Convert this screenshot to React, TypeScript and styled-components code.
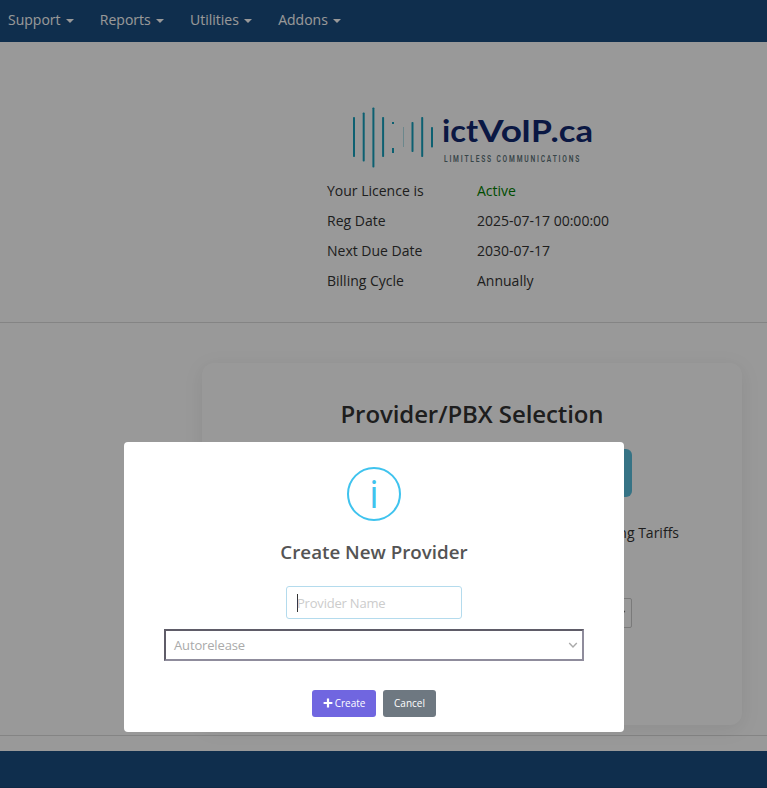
import React from 'react';
import styled, { createGlobalStyle } from 'styled-components';

const GlobalStyle = createGlobalStyle`
  * { box-sizing: border-box; }
  body { margin: 0; overflow: hidden; background: #fff; color: #333; font: 14px/20px "Open Sans", "Noto Sans", sans-serif; }
  h2, dl, dd, p { margin: 0; }
`;

const Page = styled.div`
  height: 788px;
  display: flex;
  flex-direction: column;
  overflow: hidden;
`;

const Navbar = styled.nav`
  height: 42px;
  flex: none;
  display: flex;
  align-items: flex-start;
  gap: 26px;
  padding: 10px 8px;
  background: #1a4d80;
  color: #fff;
`;

const NavItem = styled.a`
  display: flex;
  align-items: center;
  gap: 5.3px;
  &::after {
    content: "";
    margin-top: 2px;
    border: 4px solid transparent;
    border-top-color: currentColor;
    border-bottom: 0;
  }
`;

const LicencePanel = styled.section`
  height: 281px;
  flex: none;
  padding: 62px 0 0 327px;
  border-bottom: 1px solid #ddd;
`;

const LogoBox = styled.svg`
  display: block;
  width: 270px;
  height: 72px;
`;

const LicenceGrid = styled.dl`
  display: grid;
  grid-template-columns: 150px 200px;
  grid-auto-rows: 30px;
  line-height: 30px;
`;

const LicenceLabel = styled.dt`
  white-space: nowrap;
`;

const LicenceValue = styled.dd<{ $active?: boolean }>`
  color: ${p => (p.$active ? '#008000' : 'inherit')};
`;

const Main = styled.main`
  height: 413px;
  flex: none;
  padding: 40px 0 0 202px;
  border-bottom: 1px solid #ddd;
`;

const Card = styled.section`
  display: flex;
  flex-direction: column;
  align-items: center;
  width: 540px;
  height: 362px;
  padding-top: 34px;
  border-radius: 12px;
  background: #fff;
  box-shadow: 0 4px 20px rgba(0, 0, 0, 0.08);
`;

const CardTitle = styled.h2`
  font-size: 24px;
  font-weight: 600;
  line-height: 34px;
  letter-spacing: -0.09px;
`;

const PrimaryAction = styled.div`
  width: 320px;
  height: 48px;
  margin-top: 18px;
  border-radius: 6px;
  background: #5bc0de;
`;

const TariffLabel = styled.p`
  align-self: flex-end;
  margin: 26px 63px 0 0;
`;

const ProviderSelect = styled.div`
  display: flex;
  align-items: center;
  justify-content: flex-end;
  width: 320px;
  height: 30px;
  margin-top: 55px;
  padding-right: 5px;
  border: 1px solid #ccc;
  border-radius: 2px;
  color: #777;
`;

const Footer = styled.footer`
  height: 37px;
  flex: none;
  margin-top: 15px;
  background: #1a4d80;
  border-bottom: 1px solid #1a4573;
`;

const Overlay = styled.div`
  position: fixed;
  inset: 0;
  padding: 442px 0 0 124px;
  background: rgba(0, 0, 0, 0.4);
`;

const Dialog = styled.section`
  display: flex;
  flex-direction: column;
  align-items: center;
  width: 500px;
  height: 290px;
  padding-top: 25px;
  border-radius: 4px;
  background: #fff;
`;

const InfoCircle = styled.div`
  display: flex;
  align-items: center;
  justify-content: center;
  width: 54px;
  height: 54px;
  border: 2px solid #3fc3ee;
  border-radius: 50%;
  color: #3fc3ee;
  font-size: 37.5px;
  line-height: 50px;
`;

const DialogTitle = styled.h2`
  margin-top: 18px;
  color: #545454;
  font-size: 18.75px;
  font-weight: 600;
  line-height: 26px;
`;

const NameInput = styled.div`
  display: flex;
  align-items: center;
  width: 176px;
  height: 33px;
  margin-top: 21px;
  padding-left: 10px;
  border: 1px solid #b4dbed;
  border-radius: 3px;
  color: #ccc;
  font-size: 13px;
  letter-spacing: -0.2px;
`;

const Caret = styled.span`
  width: 1px;
  height: 18px;
  margin-right: -1px;
  background: #333;
`;

const TypeSelect = styled.div`
  display: flex;
  align-items: center;
  justify-content: space-between;
  width: 420px;
  height: 32px;
  margin-top: 10px;
  padding: 0 4px 0 8px;
  border: 2px solid;
  border-color: #5f5c68 #8f8c9c #8f8c9c #5f5c68;
  color: #aaa;
  font-size: 13px;
  letter-spacing: -0.15px;
`;

const Actions = styled.div`
  display: flex;
  gap: 7px;
  margin-top: 29px;
`;

const DialogButton = styled.button<{ $tone: string; $width: number }>`
  display: flex;
  align-items: center;
  justify-content: center;
  gap: 2px;
  width: ${p => p.$width}px;
  height: 27px;
  padding: 0;
  border: 0;
  border-radius: 3px;
  background: ${p => p.$tone};
  color: #fff;
  font: 500 10px/15px "Open Sans", sans-serif;
`;

const PlusIcon = styled.svg`
  width: 10px;
  height: 10px;
  margin-top: -1px;
`;

const Chevron = () => (
  <svg width="10" height="8" viewBox="0 0 10 8" fill="none" stroke="currentColor" strokeWidth="1.4">
    <path d="M1.2 2 5 6l3.8-4" />
  </svg>
);

const BARS = [
  [27, 13, 40], [36.7, 8.5, 49], [46.4, 3.5, 60], [56.1, 13, 40],
  [85.5, 18, 30], [95.2, 13, 40], [105, 23, 20.5],
];

const Logo = () => (
  <LogoBox viewBox="0 0 270 72">
    <g fill="#16a0bd">
      {BARS.map(([x, y, h]) => (
        <rect key={x} x={x - 1} y={y} width="2" height={h} rx="0.8" />
      ))}
      <rect x="65" y="18" width="2" height="2" />
      <rect x="65" y="44" width="2" height="5" />
      <rect x="76" y="23" width="0.8" height="20" opacity="0.4" />
    </g>
    <g fill="#122870" fontFamily="Lato" fontWeight="700" fontSize="31">
      <text x="115" y="37.5" textLength="36" lengthAdjust="spacingAndGlyphs">ict</text>
      <text x="151" y="37.5" textLength="44" lengthAdjust="spacingAndGlyphs">Vo</text>
      <text x="194" y="37.5" textLength="31" lengthAdjust="spacingAndGlyphs">IP</text>
      <text x="223.5" y="37.5" textLength="42.5" lengthAdjust="spacingAndGlyphs">.ca</text>
    </g>
    <text transform="translate(117 58) scale(.68 1)" fill="#5d7378" fontFamily="Roboto" fontWeight="600" fontSize="9.8" textLength="199">LIMITLESS COMMUNICATIONS</text>
  </LogoBox>
);

const NAV = ['Support', 'Reports', 'Utilities', 'Addons'];
const LICENCE = [
  ['Your Licence is', 'Active'],
  ['Reg Date', '2025-07-17 00:00:00'],
  ['Next Due Date', '2030-07-17'],
  ['Billing Cycle', 'Annually'],
];

export default function App() {
  return (
    <>
      <GlobalStyle />
      <Page>
        <Navbar>{NAV.map(label => <NavItem key={label}>{label}</NavItem>)}</Navbar>
        <LicencePanel>
          <Logo />
          <LicenceGrid>
            {LICENCE.map(([label, value]) => (
              <React.Fragment key={label}>
                <LicenceLabel>{label}</LicenceLabel>
                <LicenceValue $active={value === 'Active'}>{value}</LicenceValue>
              </React.Fragment>
            ))}
          </LicenceGrid>
        </LicencePanel>
        <Main>
          <Card>
            <CardTitle>Provider/PBX Selection</CardTitle>
            <PrimaryAction />
            <TariffLabel>ng Tariffs</TariffLabel>
            <ProviderSelect><Chevron /></ProviderSelect>
          </Card>
        </Main>
        <Footer />
      </Page>
      <Overlay>
        <Dialog role="dialog">
          <InfoCircle>i</InfoCircle>
          <DialogTitle>Create New Provider</DialogTitle>
          <NameInput><Caret />Provider Name</NameInput>
          <TypeSelect>Autorelease<Chevron /></TypeSelect>
          <Actions>
            <DialogButton $tone="#7066e0" $width={64}>
              <PlusIcon viewBox="0 0 10 10" stroke="currentColor" strokeWidth="2.2">
                <path d="M5 .6v8.8M.6 5h8.8" />
              </PlusIcon>
              Create
            </DialogButton>
            <DialogButton $tone="#6e7881" $width={53}>Cancel</DialogButton>
          </Actions>
        </Dialog>
      </Overlay>
    </>
  );
}
